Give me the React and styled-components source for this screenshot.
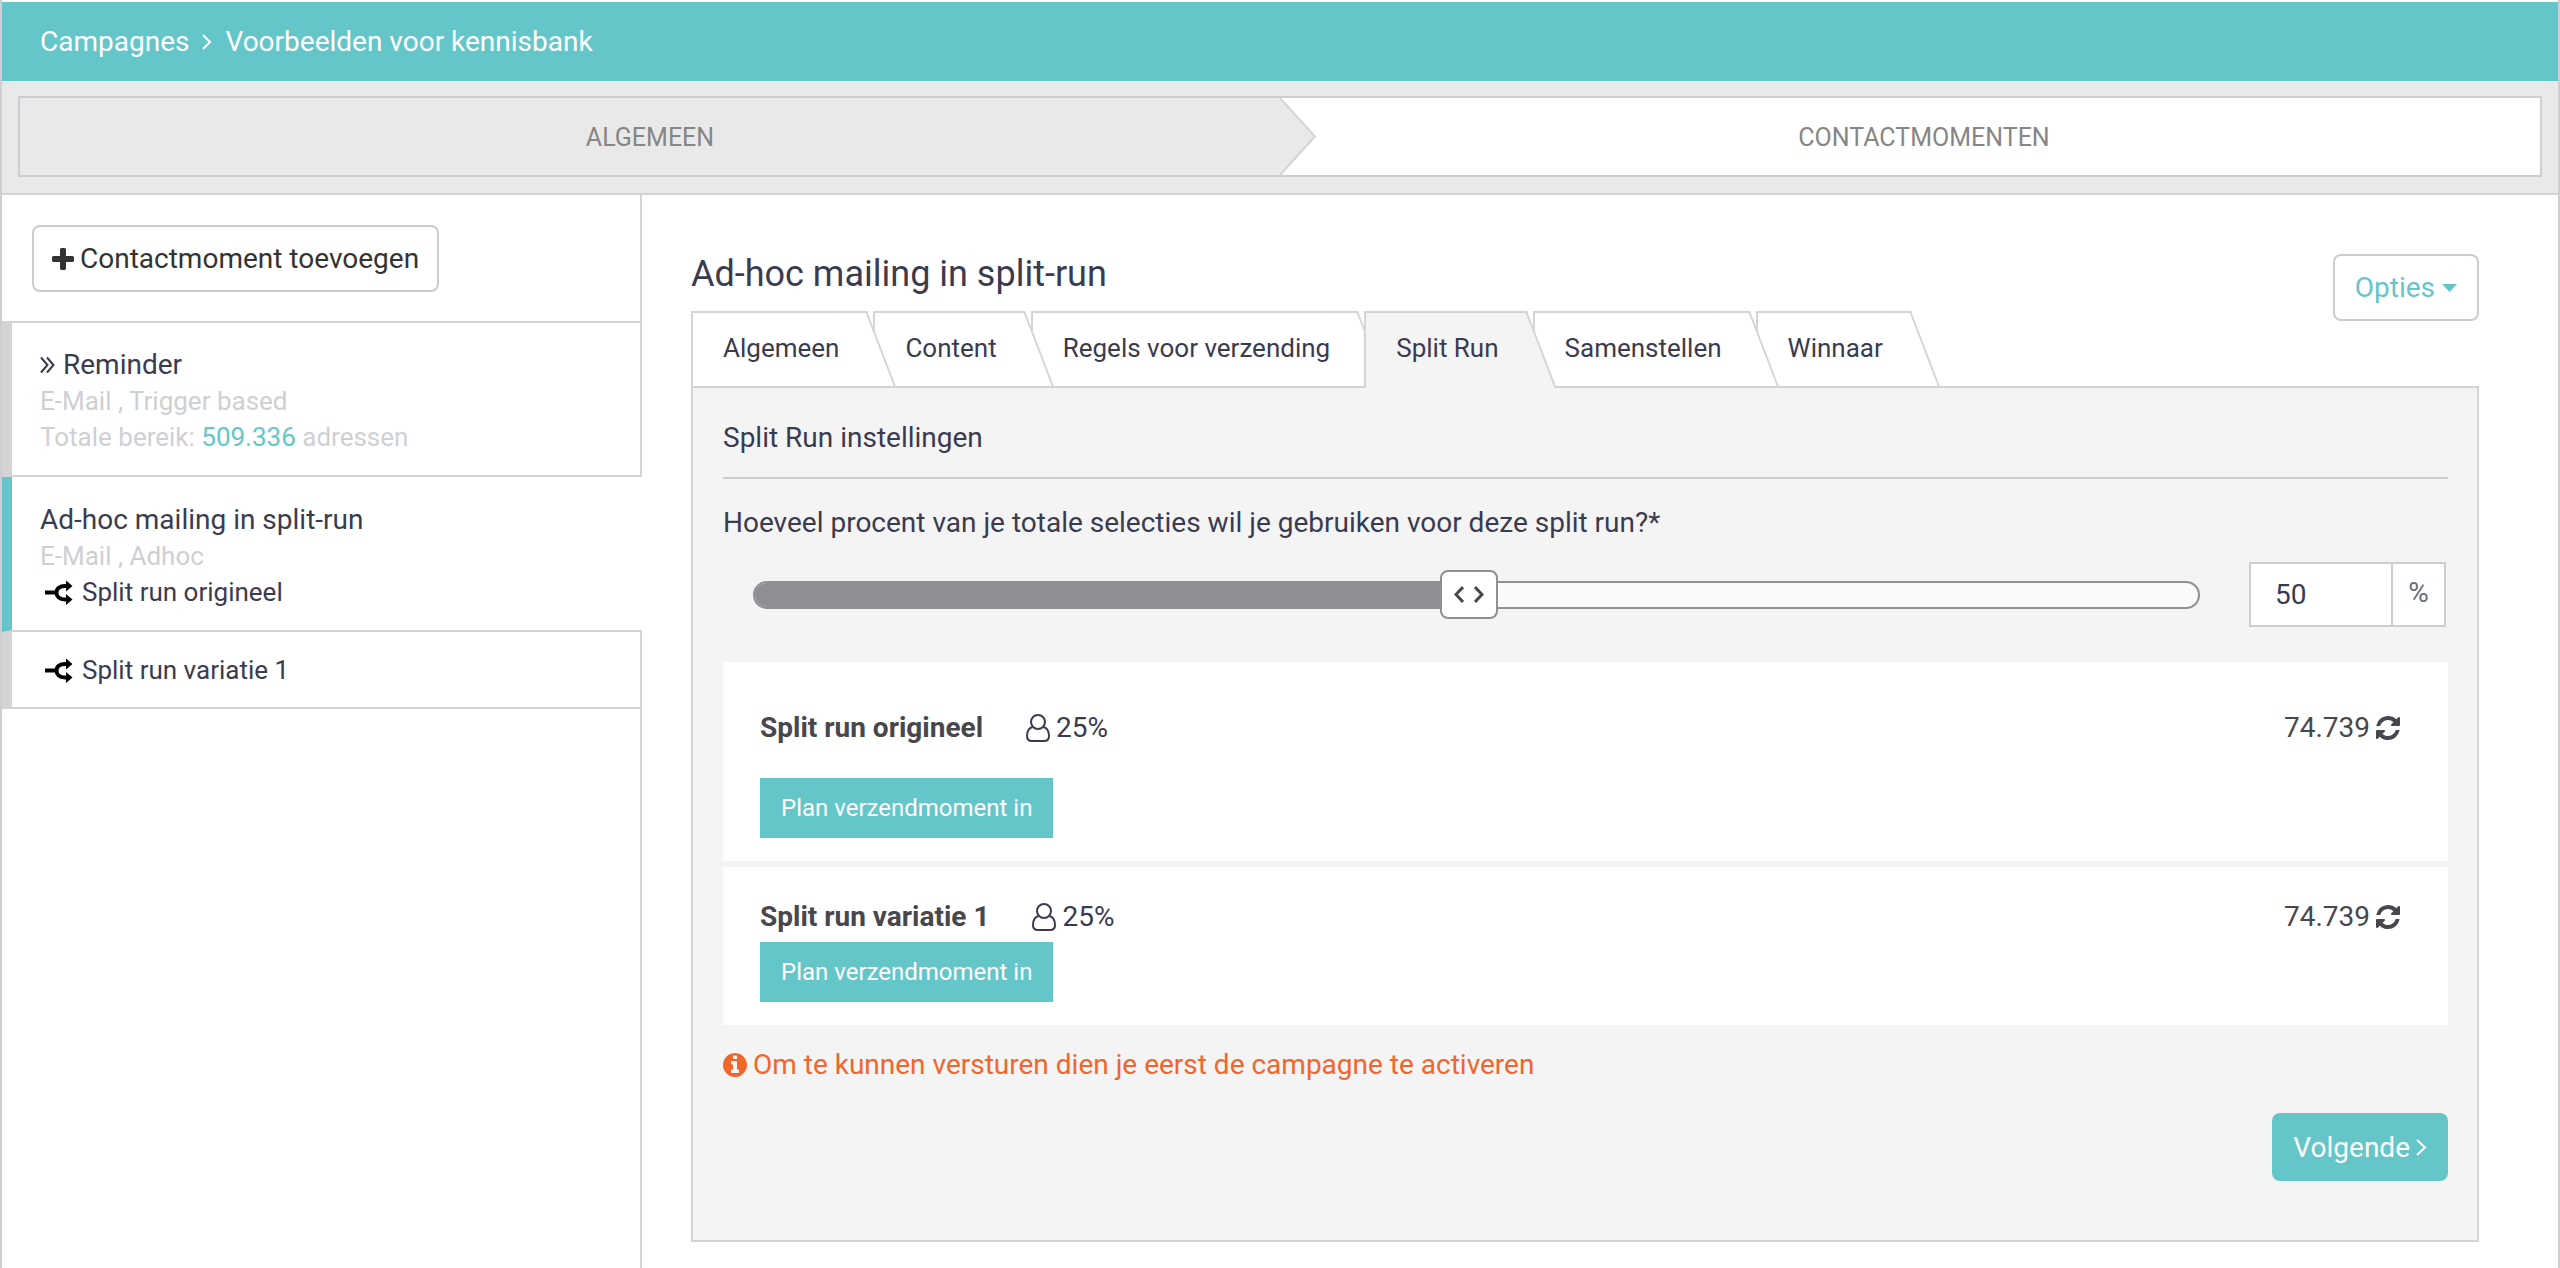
import React, { useState } from "react";
import styled, { createGlobalStyle } from "styled-components";

const teal = "#64c6c9";
const line = "#d4d4d4";
const coolLine = "#cdcdd3";
const ink = "#3b3b50";
const muted = "#cfcfd4";
const panel = "#f4f4f4";

const GlobalStyle = createGlobalStyle`
  *, *::before, *::after { box-sizing: border-box; }
  body { margin: 0; background: #fff; }
  body, button, input { font-family: Roboto, "Liberation Sans", sans-serif; }
  h1, h2, h3, p, ol, ul { margin: 0; padding: 0; font-weight: 400; list-style: none; }
  a { color: inherit; text-decoration: none; }
  button { cursor: pointer; }
  svg { display: block; flex: none; }
`;

const Frame = styled.div`
  display: flex;
  flex-direction: column;
  min-height: 100vh;
  padding-top: 2px;
  border: 0 solid ${coolLine};
  border-width: 0 2px;
  color: ${ink};
  font-size: 28px;
  line-height: 36px;
`;

const Breadcrumbs = styled.nav`
  display: flex;
  align-items: center;
  gap: 13px;
  height: 79px;
  padding: 0 38px;
  background: ${teal};
  color: #fff;
`;

const StepStrip = styled.div`
  padding: 15px 16px 16px;
  background: #e9e9e9;
  border-bottom: 2px solid ${line};
`;

const Steps = styled.ol`
  display: grid;
  grid-template-columns: 1fr 1fr;
  height: 81px;
  border: 2px solid ${coolLine};
`;

const Step = styled.li`
  position: relative;
  display: flex;
  align-items: center;
  justify-content: center;
  padding: 3px 0 0 ${(p) => (p.$open ? "28px" : "0")};
  background: ${(p) => (p.$open ? "#fff" : "#e9e9e9")};
  color: #868686;
  font-size: 25px;
  text-transform: uppercase;
`;

const StepArrow = styled.svg`
  position: absolute;
  top: 0;
  left: 100%;
  z-index: 1;
  height: 100%;
`;

const Columns = styled.div`
  display: flex;
  flex: 1;
`;

const Sidebar = styled.aside`
  display: flex;
  flex: 0 0 25vw;
  flex-direction: column;
`;

const SidebarTop = styled.div`
  padding: 30px 30px 29px;
  border-right: 2px solid ${line};
`;

const SidebarRest = styled.div`
  flex: 1;
  border-right: 2px solid ${line};
`;

const OutlineButton = styled.button`
  display: flex;
  align-items: center;
  gap: ${(p) => (p.$accent ? "7px" : "6px")};
  height: 67px;
  padding: 0 ${(p) => (p.$accent ? "20px" : "18px")};
  border: 2px solid #ccc;
  border-radius: 8px;
  background: #fff;
  color: ${(p) => (p.$accent ? teal : "#333")};
  font-size: 28px;
`;

const Moment = styled.li`
  padding: ${(p) => (p.$active ? "25px 28px 20px" : p.$compact ? "20px 28px 19px" : "24px 28px 20px")};
  border: 0 solid ${line};
  border-width: 0 ${(p) => (p.$active ? "0" : "2px")} 2px 10px;
  border-left-color: ${(p) => (p.$active ? teal : line)};

  &:first-child { border-top-width: 2px; }
`;

const MomentTitle = styled.a`
  display: flex;
  align-items: center;
  gap: 8px;
`;

const MomentMeta = styled.p`
  color: ${muted};
  font-size: 26px;

  a { color: ${teal}; }
`;

const Variant = styled.a`
  display: flex;
  align-items: center;
  gap: 9px;
  padding-left: 5px;
  font-size: 26px;
`;

const Main = styled.main`
  flex: 1;
  min-width: 0;
  padding: 59px 79px 26px 49px;
`;

const MainTop = styled.header`
  display: flex;
  align-items: flex-start;
  justify-content: space-between;
`;

const Title = styled.h1`
  margin-bottom: 17px;
  font-size: 36px;
  line-height: 40px;
`;

const Tabs = styled.div`
  position: relative;
  z-index: 1;
  display: flex;
`;

const Tab = styled.button`
  position: relative;
  z-index: ${(p) => p.$level};
  height: ${(p) => (p.$active ? "77px" : "75px")};
  margin: 0 6px ${(p) => (p.$active ? "-2px" : "0")} 0;
  padding: ${(p) => (p.$active ? "0 28px 6px 30px" : "0 28px 4px 30px")};
  border: 0 solid ${line};
  border-width: 2px 0 0 2px;
  background: ${(p) => (p.$active ? panel : "#fff")};
  color: ${ink};
  font-size: 26px;
  line-height: 36px;

  &::after {
    content: "";
    position: absolute;
    z-index: -1;
    top: -2px;
    right: 0;
    bottom: 0;
    width: 31px;
    border: 0 solid ${line};
    border-width: 2px 2px 0 0;
    background: inherit;
    transform: skewX(21deg);
    transform-origin: top right;
  }
`;

const Panel = styled.section`
  padding: 31px 29px 59px 30px;
  border: 2px solid ${line};
  background: ${panel};
`;

const PanelTitle = styled.h2`
  padding-bottom: 20px;
  border-bottom: 2px solid ${coolLine};
  font-size: 28px;
  line-height: 38px;
`;

const Question = styled.label`
  display: block;
  margin: 26px 0 21px;
`;

const ShareRow = styled.div`
  display: flex;
  align-items: center;
  gap: 49px;
  margin-bottom: 35px;
  padding: 0 2px 0 30px;
`;

const Track = styled.div`
  position: relative;
  flex: 1;
  height: 28px;
  border: 2px solid #8f8f94;
  border-radius: 14px;
  background: #fafafa;
`;

const Fill = styled.div`
  height: 100%;
  border-radius: 12px 0 0 12px;
  background: #8f8e93;
`;

const Handle = styled.span`
  position: absolute;
  top: -13px;
  display: flex;
  align-items: center;
  justify-content: center;
  gap: 10px;
  width: 58px;
  height: 49px;
  margin-left: -37px;
  border: 2px solid #8f8f94;
  border-radius: 8px;
  background: #fff;
  color: #47474d;
`;

const Range = styled.input`
  position: absolute;
  inset: -12px 0;
  width: 100%;
  margin: 0;
  opacity: 0;
  cursor: pointer;
`;

const PercentField = styled.div`
  display: flex;
  height: 65px;
  border: 2px solid ${coolLine};
  background: #fff;
`;

const PercentInput = styled.input`
  width: 142px;
  padding: 0 24px;
  border: 0;
  border-right: 2px solid ${coolLine};
  background: transparent;
  color: ${ink};
  font-size: 28px;
`;

const PercentSign = styled.span`
  width: 51px;
  color: #6b6b7a;
  line-height: 58px;
  text-align: center;
`;

const Cards = styled.div`
  display: grid;
  gap: 6px;
`;

const Card = styled.article`
  padding: ${(p) => (p.$roomy ? "48px" : "32px")} 48px 23px 37px;
  background: #fff;
`;

const CardHead = styled.div`
  display: flex;
  align-items: center;
  margin-bottom: ${(p) => (p.$roomy ? "32px" : "7px")};
`;

const CardName = styled.h3`
  margin-right: 43px;
  color: #47474d;
  font-size: 28px;
  font-weight: 700;
`;

const IconText = styled.span`
  display: flex;
  align-items: center;
  gap: 6px;
`;

const Reach = styled(IconText)`
  margin-left: auto;
  color: #47474d;
`;

const RefreshButton = styled.button`
  padding: 0;
  border: 0;
  background: none;
  color: inherit;
`;

const PlanButton = styled.button`
  height: 60px;
  padding: 0 21px;
  border: 0;
  background: ${teal};
  color: #fff;
  font-size: 24px;
`;

const Notice = styled.p`
  display: flex;
  align-items: center;
  gap: 6px;
  margin: 22px 0 30px;
  color: #f0662c;
`;

const Actions = styled.div`
  display: flex;
  justify-content: flex-end;
`;

const NextButton = styled.button`
  display: flex;
  align-items: center;
  gap: 6px;
  height: 68px;
  padding: 0 21px;
  border: 0;
  border-radius: 8px;
  background: ${teal};
  color: #fff;
  font-size: 28px;
`;

const Chevron = ({ w = 9, h = 16, left = false, stroke = 2 }) => (
  <svg width={w} height={h} viewBox={`0 0 ${w} ${h}`} fill="none" stroke="currentColor" strokeWidth={stroke} aria-hidden="true">
    <path d={left ? `M${w - 1} 1 L2 ${h / 2} L${w - 1} ${h - 1}` : `M1 1 L${w - 2} ${h / 2} L1 ${h - 1}`} />
  </svg>
);

const DoubleChevron = () => (
  <svg width="15" height="18" viewBox="0 0 15 18" fill="none" stroke="currentColor" strokeWidth="2" aria-hidden="true">
    <path d="M1 1.5 L7.5 9 L1 16.5 M7 1.5 L13.5 9 L7 16.5" />
  </svg>
);

const PlusIcon = () => (
  <svg width="22" height="22" viewBox="192 128 1408 1408" fill="currentColor" aria-hidden="true">
    <path d="M1600 736v192q0 40-28 68t-68 28h-416v416q0 40-28 68t-68 28h-192q-40 0-68-28t-28-68v-416h-416q-40 0-68-28t-28-68v-192q0-40 28-68t68-28h416v-416q0-40 28-68t68-28h192q40 0 68 28t28 68v416h416q40 0 68 28t28 68z" />
  </svg>
);

const SplitIcon = () => (
  <svg width="28" height="25" viewBox="0 0 28 25" fill="none" aria-hidden="true">
    <path d="M0 12.5 H11 M22 6 H20 C14.5 6 11.5 8.5 11.5 12.5 C11.5 16.5 14.5 19.5 20 19.5 H22" stroke="#000" strokeWidth="4" />
    <path d="M21 0.5 L27.5 6 L21 11.5 Z M21 14 L27.5 19.5 L21 25 Z" fill="#000" />
  </svg>
);

const UserIcon = () => (
  <svg width="24" height="28" viewBox="0 0 24 28" fill="none" stroke="currentColor" strokeWidth="2" aria-hidden="true">
    <circle cx="12" cy="8" r="7" />
    <path d="M6.5 13 C3 14 1 17.5 1 22 C1 25 3 27 6 27 H18 C21 27 23 25 23 22 C23 17.5 21 14 17.5 13" />
  </svg>
);

const RefreshIcon = () => (
  <svg width="24" height="24" viewBox="128 128 1536 1536" fill="currentColor" aria-hidden="true">
    <path d="M1639 1056q0 5-1 7-64 268-268 434.500t-478 166.500q-146 0-282.500-55t-243.500-157l-129 129q-19 19-45 19t-45-19-19-45v-448q0-26 19-45t45-19h448q26 0 45 19t19 45-19 45l-137 137q71 66 161 102t187 36q134 0 250-65t186-179q11-17 53-117 8-23 30-23h192q13 0 22.500 9.500t9.500 22.500zm25-800v448q0 26-19 45t-45 19h-448q-26 0-45-19t-19-45 19-45l138-138q-148-137-349-137-134 0-250 65t-186 179q-11 17-53 117-8 23-30 23h-199q-13 0-22.500-9.500t-9.500-22.500v-7q65-268 270-434.500t480-166.500q146 0 284 55.500t245 156.500l130-129q19-19 45-19t45 19 19 45z" />
  </svg>
);

const InfoIcon = () => (
  <svg width="24" height="24" viewBox="128 128 1536 1536" fill="currentColor" aria-hidden="true">
    <path d="M1152 1376v-160q0-14-9-23t-23-9h-96v-512q0-14-9-23t-23-9h-320q-14 0-23 9t-9 23v160q0 14 9 23t23 9h96v320h-96q-14 0-23 9t-9 23v160q0 14 9 23t23 9h448q14 0 23-9t9-23zm-128-896v-160q0-14-9-23t-23-9h-192q-14 0-23 9t-9 23v160q0 14 9 23t23 9h192q14 0 23-9t9-23zm640 416q0 209-103 385.500t-279.500 279.500-385.500 103-385.500-103-279.500-279.500-103-385.500 103-385.500 279.500-279.500 385.500-103 385.500 103 279.500 279.500 103 385.500z" />
  </svg>
);

const CaretIcon = () => (
  <svg width="15" height="8" viewBox="0 0 15 8" fill="currentColor" aria-hidden="true">
    <path d="M0 0 H15 L7.5 8 Z" />
  </svg>
);

const TABS = ["Algemeen", "Content", "Regels voor verzending", "Split Run", "Samenstellen", "Winnaar"];

const VARIANTS = [
  { name: "Split run origineel", share: "25%", reach: "74.739", roomy: true },
  { name: "Split run variatie 1", share: "25%", reach: "74.739", roomy: false },
];

export default function App() {
  const [tab, setTab] = useState("Split Run");
  const [percent, setPercent] = useState(50);
  const updatePercent = (e) => setPercent(Math.max(0, Math.min(100, Number(e.target.value) || 0)));

  return (
    <Frame>
      <GlobalStyle />
      <Breadcrumbs>
        <a href="#campagnes">Campagnes</a>
        <Chevron w={10} h={16} />
        <a href="#voorbeelden">Voorbeelden voor kennisbank</a>
      </Breadcrumbs>

      <StepStrip>
        <Steps>
          <Step>
            <a href="#algemeen">Algemeen</a>
            <StepArrow width="37" viewBox="0 0 37 77" preserveAspectRatio="none" aria-hidden="true">
              <path d="M0 0 L35 38.5 L0 77 Z" fill="#e9e9e9" />
              <path d="M0 0 L35 38.5 L0 77" fill="none" stroke={line} strokeWidth="2" />
            </StepArrow>
          </Step>
          <Step $open>
            <a href="#contactmomenten">Contactmomenten</a>
          </Step>
        </Steps>
      </StepStrip>

      <Columns>
        <Sidebar>
          <SidebarTop>
            <OutlineButton type="button">
              <PlusIcon />
              Contactmoment toevoegen
            </OutlineButton>
          </SidebarTop>
          <ul>
            <Moment>
              <MomentTitle href="#reminder">
                <DoubleChevron />
                Reminder
              </MomentTitle>
              <MomentMeta>E-Mail , Trigger based</MomentMeta>
              <MomentMeta>
                Totale bereik: <a href="#bereik">509.336</a> adressen
              </MomentMeta>
            </Moment>
            <Moment $active>
              <MomentTitle href="#adhoc">Ad-hoc mailing in split-run</MomentTitle>
              <MomentMeta>E-Mail , Adhoc</MomentMeta>
              <Variant href="#origineel">
                <SplitIcon />
                Split run origineel
              </Variant>
            </Moment>
            <Moment $compact>
              <Variant href="#variatie">
                <SplitIcon />
                Split run variatie 1
              </Variant>
            </Moment>
          </ul>
          <SidebarRest />
        </Sidebar>

        <Main>
          <MainTop>
            <div>
              <Title>Ad-hoc mailing in split-run</Title>
              <Tabs role="tablist">
                {TABS.map((name, i) => (
                  <Tab
                    key={name}
                    type="button"
                    role="tab"
                    aria-selected={name === tab}
                    $active={name === tab}
                    $level={name === tab ? TABS.length + 1 : TABS.length - i}
                    onClick={() => setTab(name)}
                  >
                    {name}
                  </Tab>
                ))}
              </Tabs>
            </div>
            <OutlineButton type="button" $accent aria-haspopup="menu">
              Opties
              <CaretIcon />
            </OutlineButton>
          </MainTop>

          <Panel>
            <PanelTitle>Split Run instellingen</PanelTitle>
            <Question htmlFor="percent">
              Hoeveel procent van je totale selecties wil je gebruiken voor deze split run?*
            </Question>
            <ShareRow>
              <Track>
                <Fill style={{ width: `${percent}%` }} />
                <Handle style={{ left: `${percent}%` }}>
                  <Chevron w={10} h={17} left stroke={3} />
                  <Chevron w={10} h={17} stroke={3} />
                </Handle>
                <Range type="range" min="0" max="100" value={percent} onChange={updatePercent} aria-label="Percentage van de selecties" />
              </Track>
              <PercentField>
                <PercentInput id="percent" type="text" inputMode="numeric" value={percent} onChange={updatePercent} />
                <PercentSign>%</PercentSign>
              </PercentField>
            </ShareRow>

            <Cards>
              {VARIANTS.map((v) => (
                <Card key={v.name} $roomy={v.roomy}>
                  <CardHead $roomy={v.roomy}>
                    <CardName>{v.name}</CardName>
                    <IconText>
                      <UserIcon />
                      {v.share}
                    </IconText>
                    <Reach>
                      {v.reach}
                      <RefreshButton type="button" aria-label="Vernieuwen">
                        <RefreshIcon />
                      </RefreshButton>
                    </Reach>
                  </CardHead>
                  <PlanButton type="button">Plan verzendmoment in</PlanButton>
                </Card>
              ))}
            </Cards>

            <Notice>
              <InfoIcon />
              Om te kunnen versturen dien je eerst de campagne te activeren
            </Notice>

            <Actions>
              <NextButton type="button">
                Volgende
                <Chevron w={11} h={17} />
              </NextButton>
            </Actions>
          </Panel>
        </Main>
      </Columns>
    </Frame>
  );
}
